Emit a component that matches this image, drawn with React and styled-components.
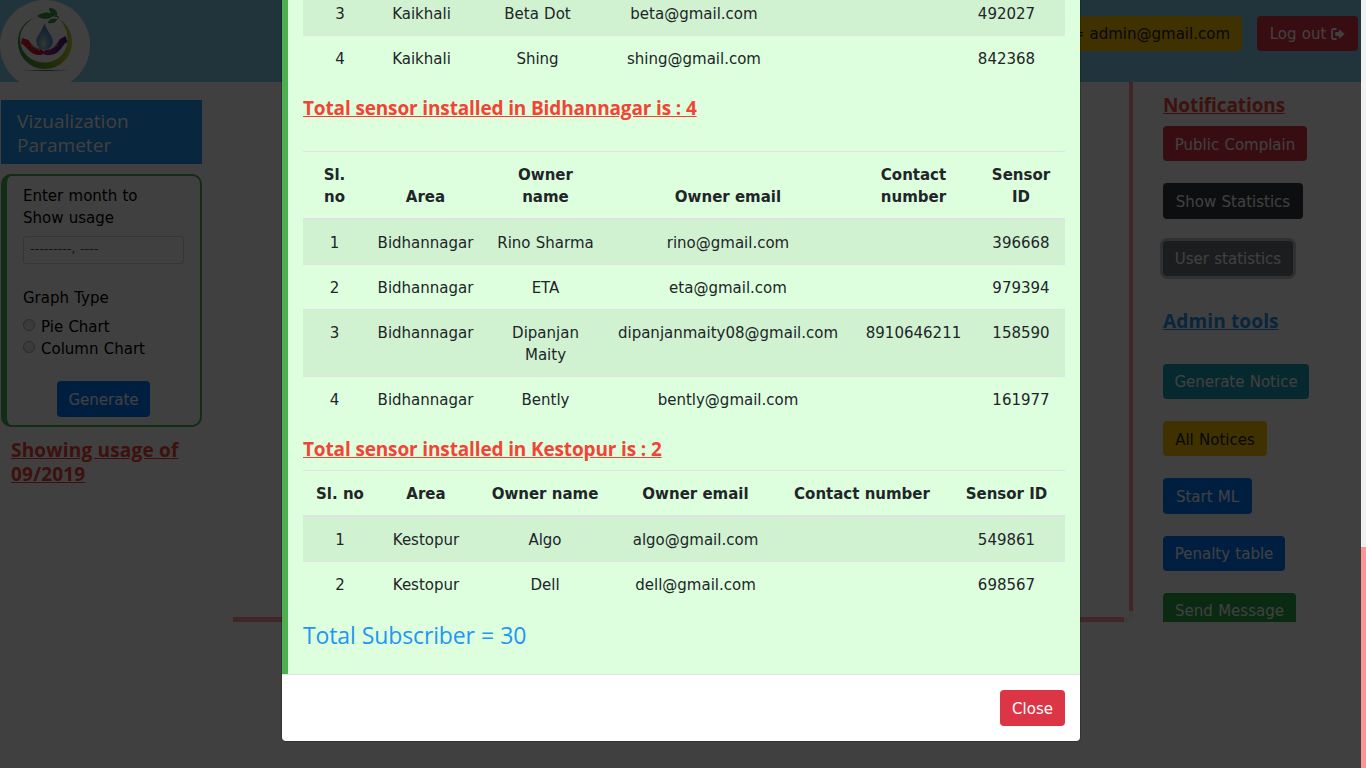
import React from 'react';
import styled, { createGlobalStyle, css } from 'styled-components';

const Global = createGlobalStyle`
  *, *::before, *::after { box-sizing: border-box; }
  body {
    margin: 0; overflow: hidden; background: #fff; color: #000;
    font: 15px/22px Verdana, "DejaVu Sans", sans-serif;
  }
`;

const uiFont = css`font-family: "Segoe UI", "Open Sans", sans-serif;`;

const Window = styled.div`display: flex; width: 1366px; height: 768px; overflow: hidden;`;
const Page = styled.div`position: relative; width: 1361px; height: 768px; overflow: hidden;`;
const Scrollbar = styled.div`width: 5px; background: #f1f1f1; display: flex; flex-direction: column; justify-content: flex-end;`;
const Thumb = styled.div`height: 221px; background: #ff9696;`;

const Header = styled.header`
  height: 82px; background: #87ceeb; display: flex; justify-content: space-between;
  align-items: flex-start; overflow: hidden;
`;
const Logo = styled.svg`width: 90px; height: 90px; flex: none;`;
const Account = styled.div`display: flex; gap: 15px; padding: 16px 3px 0 0;`;

const tones = {
  red: ['#dc3545', '#fff'], dark: ['#343a40', '#fff'], gray: ['#6c757d', '#fff'],
  teal: ['#17a2b8', '#fff'], amber: ['#ffc107', '#212529'], blue: ['#007bff', '#fff'],
  green: ['#28a745', '#fff'],
};
const Button = styled.button`
  flex: none; display: flex; align-items: center; justify-content: center;
  width: ${p => p.$w}px; height: ${p => p.$h || 35}px; padding: ${p => (p.$low ? 2 : 0)}px 0 0;
  border: 0; border-radius: 4px;
  background: ${p => tones[p.$tone][0]}; color: ${p => tones[p.$tone][1]};
  font: inherit; white-space: nowrap; word-spacing: 0.5px;
  box-shadow: ${p => (p.$focus ? '0 0 0 3px rgba(130,138,145,.5)' : 'none')};
  svg { margin-left: 5px; }
`;
const AccountBadge = styled(Button)`width: 248px; justify-content: flex-end; padding-right: 12px;`;

const Columns = styled.div`display: flex; height: 540px;`;
const Sidebar = styled.aside`width: 233px; padding: 18px 0 0 1px;`;
const SideTitle = styled.div`
  ${uiFont} width: 201px; height: 64px; padding: 9px 16px 0; background: #2196f3; color: #fff;
  font-size: 19px; line-height: 24px; letter-spacing: 0.05px;
`;
const Panel = styled.form`
  width: 201px; height: 253px; margin-top: 10px; padding: 9px 16px 0;
  border: 2px solid #4caf50; border-left-width: 6px; border-radius: 10px; word-spacing: 0.5px;
`;
const MonthField = styled.div`
  width: 161px; height: 28px; margin: 7px 0 23px; padding: 0 6px; border: 1px solid #ced4da;
  border-radius: 3px; color: #495057; font-size: 13px; line-height: 24px; letter-spacing: -0.1px;
`;
const Choice = styled.label`display: flex; align-items: center; height: 22px; gap: 6px;`;
const Choices = styled.div`padding: 7px 0 21px;`;
const Radio = styled.span`
  width: 12px; height: 12px; margin-bottom: 5px; border: 1px solid #a6a6a6; border-radius: 50%;
  background: #e9e9e9;
`;
const Centered = styled.div`display: flex; justify-content: center;`;

const Title = styled.h4`
  ${uiFont} margin: 0; font-size: 19px; line-height: 24px; font-weight: 700;
  color: ${p => p.$color || '#f44336'}; text-decoration: underline; white-space: pre-line;
  letter-spacing: ${p => p.$ls ?? -0.14}px;
`;
const Usage = styled.div`padding: 11px 0 0 10px;`;

const Chart = styled.main`
  width: 900px; display: grid; grid-template: 529px 6px 5px / 891px 5px 4px;
`;
const VBar = styled.div`grid-area: 1 / 3; background: #ff9696;`;
const HBar = styled.div`grid-area: 3 / 1; background: #ff9696;`;
const Corner = styled.div`grid-area: ${p => p.$area}; background: #f1f1f1;`;

const Tools = styled.nav`
  width: 228px; padding: 11px 0 0 30px; overflow: hidden; display: flex; flex-direction: column;
`;
const Stack = styled.div`
  display: flex; flex-direction: column; gap: 22px; padding: ${p => p.$pad};
`;

const Backdrop = styled.div`
  position: absolute; inset: 0; background: rgba(0,0,0,.75); display: flex;
  flex-direction: column; justify-content: flex-end; align-items: center; padding-bottom: 27px;
  overflow: hidden;
`;
const Modal = styled.section`
  width: 798px; margin-left: 1px; background: #fff; border-radius: 0 0 4px 4px; overflow: hidden;
  box-shadow: 0 0 0 1px rgba(0,0,0,.2); color: #212529; flex: none;
`;
const Body = styled.div`background: #dfd; border-left: 6px solid #4caf50; padding: 0 15px 24px;`;
const Footer = styled.footer`
  height: 67px; border-top: 1px solid #dee2e6; padding: 15px; display: flex; justify-content: flex-end;
`;
const Total = styled.h3`
  ${uiFont} margin: 15px 0 0; font-size: 23px; line-height: 29px; font-weight: 400; color: #2196f3;
  letter-spacing: -0.15px; word-spacing: 0.5px;
`;
const AreaTitle = styled.div`padding: 16px 0 ${p => p.$gap}px;`;

const Table = styled.table`
  width: 762px; table-layout: fixed; border-collapse: separate; border-spacing: 0; text-align: center;
`;
const Row = styled.tr`
  height: ${p => p.$h}px; background: ${p => (p.$striped ? 'rgba(0,0,0,.05)' : 'transparent')};
  &:first-child td { border-top: ${p => (p.$under ? 0 : 1)}px solid #dee2e6; }
`;
const Cell = styled.td`
  border-top: 1px solid #dee2e6; padding: 12px 8px 0; vertical-align: top; word-spacing: 0.5px;
`;
const Head = styled.th`
  border-top: 1px solid #dee2e6; border-bottom: 2px solid #dee2e6; padding: 12px 0 10px;
  vertical-align: bottom; font-weight: 700; white-space: pre-line;
`;

const labels = ['Sl. no', 'Area', 'Owner name', 'Owner email', 'Contact number', 'Sensor ID'];
const wrapped = ['Sl.\nno', 'Area', 'Owner\nname', 'Owner email', 'Contact\nnumber', 'Sensor\nID'];

const kaikhali = [
  ['3', 'Kaikhali', 'Beta Dot', 'beta@gmail.com', '', '492027'],
  ['4', 'Kaikhali', 'Shing', 'shing@gmail.com', '', '842368'],
];
const bidhannagar = [
  ['1', 'Bidhannagar', 'Rino Sharma', 'rino@gmail.com', '', '396668'],
  ['2', 'Bidhannagar', 'ETA', 'eta@gmail.com', '', '979394'],
  ['3', 'Bidhannagar', 'Dipanjan Maity', 'dipanjanmaity08@gmail.com', '8910646211', '158590'],
  ['4', 'Bidhannagar', 'Bently', 'bently@gmail.com', '', '161977'],
];
const kestopur = [
  ['1', 'Kestopur', 'Algo', 'algo@gmail.com', '', '549861'],
  ['2', 'Kestopur', 'Dell', 'dell@gmail.com', '', '698567'],
];

const Col = styled.col`width: ${p => p.$w}px;`;

function SensorTable({ widths, head, rows, heights }) {
  return (
    <Table>
      <colgroup>{widths.map((w, i) => <Col key={i} $w={w} />)}</colgroup>
      {head && <thead><tr>{head.map(h => <Head key={h}>{h}</Head>)}</tr></thead>}
      <tbody>
        {rows.map((r, i) => (
          <Row key={r[0]} $h={heights[i]} $striped={i % 2 === 0} $under={!!head}>
            {r.map((c, j) => <Cell key={j}>{c}</Cell>)}
          </Row>
        ))}
      </tbody>
    </Table>
  );
}

function WaterLogo() {
  return (
    <Logo viewBox="0 0 90 90">
      <defs>
        <linearGradient id="ring" x1="0" x2="1">
          <stop offset="0" stopColor="#388e3c" /><stop offset=".45" stopColor="#5aa52c" />
          <stop offset="1" stopColor="#c5cc28" />
        </linearGradient>
        <linearGradient id="red" x1="0" x2="1">
          <stop offset="0" stopColor="#e8202c" /><stop offset="1" stopColor="#b01830" />
        </linearGradient>
        <linearGradient id="purple" x1="0" x2="1">
          <stop offset="0" stopColor="#a8298a" /><stop offset="1" stopColor="#3f1d78" />
        </linearGradient>
        <radialGradient id="drop" cx=".45" cy=".75" r=".7">
          <stop offset="0" stopColor="#d9dfae" /><stop offset=".4" stopColor="#6fa9cf" />
          <stop offset="1" stopColor="#3977a8" />
        </radialGradient>
        <radialGradient id="shade">
          <stop offset="0" stopColor="#555" /><stop offset="1" stopColor="#555" stopOpacity="0" />
        </radialGradient>
      </defs>
      <circle cx="45" cy="45" r="45" fill="#fff" />
      <path fill="url(#ring)" d="M34 18C23 22 18 31 18 42c0 15 12 27 27 27s27-12 27-27c0-11-6-19-13-23 5 5 8.500 12 8.500 20 0 14-10 23.500-23 23.500S20 53 20 39c0-9 5-16 14-21Z" />
      <path fill="url(#red)" d="M22 38l6.500 2c3 5 7 8 13.500 9.500l2.500 3c-1 2.500-6 3.500-10.500 1.500C28 51 26 46 21 43.500Z" />
      <path fill="url(#purple)" d="M65.500 36l2 6c-5 2.500-6 8-11 11-4 2.500-11 3-14 .5l2.500-3.500c6-.5 11-4 15-11Z" />
      <path fill="none" stroke="#fff" strokeWidth=".7" d="m31 45 9 5.500m18-6-9 5.500" />
      <path fill="url(#drop)" stroke="#fff" strokeWidth=".4" d="M44.500 23C42 31 36 36 36 41.500a8.500 8.500 0 0 0 17 0C53 36 47 31 44.500 23Z" />
      <path fill="#3b9b45" d="M37 16c5-4 12-5 17-1-4 5-12 5-17 1ZM49 8c6 0 9 3 8 8-5-1-8-4-8-8ZM48 23c0-4 5-5 9-4-1 4-4 5-9 4Z" />
      <path fill="none" stroke="#388e3c" strokeWidth="1" d="m50 15 9 2-3 3" />
      <ellipse cx="45" cy="70.500" rx="25" ry="1" fill="url(#shade)" />
    </Logo>
  );
}

const LogoutIcon = () => (
  <svg width="14" height="14" viewBox="0 0 14 14">
    <path fill="none" stroke="currentColor" strokeWidth="1.8" d="M5.500 2H2.800Q1 2 1 3.800v6.400Q1 12 2.800 12h2.700" />
    <path fill="currentColor" d="M8 2.200 13.800 7 8 11.800V9H4.300V5H8Z" />
  </svg>
);

export default function App() {
  return (
    <Window>
      <Global />
      <Page>
        <Header>
          <WaterLogo />
          <Account>
            <AccountBadge $tone="amber">Admin = admin@gmail.com</AccountBadge>
            <Button $tone="red" $w={101}>Log out<LogoutIcon /></Button>
          </Account>
        </Header>
        <Columns>
          <Sidebar>
            <SideTitle>Vizualization Parameter</SideTitle>
            <Panel>
              <div>Enter month to<br />Show usage</div>
              <MonthField>---------, ----</MonthField>
              <div>Graph Type</div>
              <Choices>
                <Choice><Radio />Pie Chart</Choice>
                <Choice><Radio />Column Chart</Choice>
              </Choices>
              <Centered><Button as="div" $tone="blue" $w={93} $h={36} $low>Generate</Button></Centered>
            </Panel>
            <Usage><Title $ls={0.2}>{'Showing usage of\n09/2019'}</Title></Usage>
          </Sidebar>
          <Chart>
            <VBar /><HBar /><Corner $area="2 / 3" /><Corner $area="3 / 2" />
          </Chart>
          <Tools>
            <Title $ls={-0.1}>Notifications</Title>
            <Stack $pad="9px 0 33px">
              <Button $tone="red" $w={144} $low>Public Complain</Button>
              <Button $tone="dark" $w={140} $h={36} $low>Show Statistics</Button>
              <Button $tone="gray" $w={130} $focus>User statistics</Button>
            </Stack>
            <Title $color="#2196f3" $ls={0.15}>Admin tools</Title>
            <Stack $pad="31px 0 0">
              <Button $tone="teal" $w={146}>Generate Notice</Button>
              <Button $tone="amber" $w={104} $low>All Notices</Button>
              <Button $tone="blue" $w={89} $h={36} $low>Start ML</Button>
              <Button $tone="blue" $w={122}>Penalty table</Button>
              <Button $tone="green" $w={133}>Send Message</Button>
            </Stack>
          </Tools>
        </Columns>
        <Backdrop>
          <Modal>
            <Body>
              <SensorTable widths={[74, 89, 143, 170, 169, 117]} rows={kaikhali} heights={[45, 45]} />
              <AreaTitle $gap={31}><Title>Total sensor installed in Bidhannagar is : 4</Title></AreaTitle>
              <SensorTable widths={[63, 119, 121, 244, 127, 88]} head={wrapped} rows={bidhannagar} heights={[44, 45, 67, 45]} />
              <AreaTitle $gap={9}><Title>Total sensor installed in Kestopur is : 2</Title></AreaTitle>
              <SensorTable widths={[74, 98, 140, 161, 172, 117]} head={labels} rows={kestopur} heights={[44, 45]} />
              <Total>Total Subscriber = 30</Total>
            </Body>
            <Footer><Button $tone="red" $w={65} $h={36} $low>Close</Button></Footer>
          </Modal>
        </Backdrop>
      </Page>
      <Scrollbar><Thumb /></Scrollbar>
    </Window>
  );
}
